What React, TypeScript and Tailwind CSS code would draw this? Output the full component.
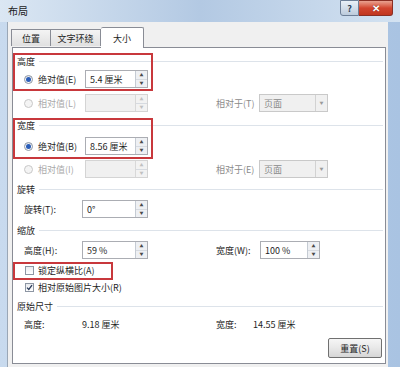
import * as React from 'react';

const font = { fontFamily: '"Microsoft YaHei", "Noto Sans CJK SC", "Noto Sans", sans-serif' };

const Header = ({ text, className = '' }: { text: string; className?: string }) => (
  <div className={`flex items-center h-[16px] ${className}`}>
    <span className="text-[#1e1e1e]">{text}</span>
    <div className="flex-1 h-px bg-[#dde3ea] ml-[4px]" />
  </div>
);

const Radio = ({ checked, disabled }: { checked?: boolean; disabled?: boolean }) => (
  <span
    className={`w-[9px] h-[9px] rounded-full border flex items-center justify-center shrink-0 ${
      disabled ? 'border-[#c8c8c8] bg-[#f4f4f4]' : 'border-[#8d96a3] bg-gradient-to-b from-[#e6e9ee] to-white'
    }`}
  >
    {checked && <span className="w-[5px] h-[5px] rounded-full bg-[#2a5db8]" />}
  </span>
);

const Spinner = ({ disabled }: { disabled?: boolean }) => (
  <div
    className={`w-[12px] h-full flex flex-col border-l ${
      disabled ? 'border-[#d8d8d8] bg-[#f2f2f2]' : 'border-[#c5cbd3] bg-[#eef0f3]'
    }`}
  >
    <div className="flex-1 flex items-center justify-center border-b border-[#d6dae0]">
      <span className={`text-[4px] leading-none ${disabled ? 'text-[#c0c0c0]' : 'text-[#4a4a4a]'}`}>▲</span>
    </div>
    <div className="flex-1 flex items-center justify-center">
      <span className={`text-[4px] leading-none ${disabled ? 'text-[#c0c0c0]' : 'text-[#4a4a4a]'}`}>▼</span>
    </div>
  </div>
);

const SpinInput = ({ value, w, disabled }: { value?: string; w: string; disabled?: boolean }) => (
  <div
    className={`${w} h-[18px] flex border ${
      disabled ? 'border-[#d4d4d4] bg-[#f0f0f0]' : 'border-[#abadb3] bg-white'
    }`}
  >
    <div className="flex-1 flex items-center pl-[4px] text-[#1e1e1e]">{value}</div>
    <Spinner disabled={disabled} />
  </div>
);

const Select = ({ value }: { value: string }) => (
  <div className="w-[69px] h-[18px] flex border border-[#c9c9c9] bg-[#f0f0f0]">
    <div className="flex-1 flex items-center pl-[4px] text-[#8a8a8a]">{value}</div>
    <div className="w-[12px] border-l border-[#d2d2d2] flex items-center justify-center">
      <span className="text-[4px] leading-none text-[#9a9a9a]">▼</span>
    </div>
  </div>
);

const Check = ({ checked }: { checked?: boolean }) => (
  <span className="w-[9px] h-[9px] border border-[#8d96a3] bg-gradient-to-b from-[#e8ebef] to-white flex items-center justify-center shrink-0">
    {checked && (
      <svg width="7" height="7" viewBox="0 0 7 7">
        <path d="M1 3.6 L2.8 5.4 L6 1.2" fill="none" stroke="#2b3c5a" strokeWidth="1.3" />
      </svg>
    )}
  </span>
);

const RadioRow = ({
  label,
  checked,
  disabled,
  value,
  rel,
  className = '',
}: {
  label: string;
  checked?: boolean;
  disabled?: boolean;
  value?: string;
  rel?: string;
  className?: string;
}) => (
  <div className={`flex items-center h-[20px] ${className}`}>
    <div className={`ml-[7px] w-[61px] flex items-center ${disabled ? 'text-[#a9a9a9]' : 'text-[#1e1e1e]'}`}>
      <Radio checked={checked} disabled={disabled} />
      <span className="ml-[5px]">{label}</span>
    </div>
    <SpinInput value={value} w="w-[63px]" disabled={disabled} />
    {rel && (
      <>
        <span className="ml-[68px] w-[43px] text-[#8a8a8a]">{rel}</span>
        <Select value="页面" />
      </>
    )}
  </div>
);

export default function App() {
  return (
    <div
      className="w-[400px] h-[367px] overflow-hidden relative bg-gradient-to-r from-[#c8daee] via-[#b7cde6] to-[#a9c3e2] text-[9px] leading-none"
      style={font}
    >
      {/* title bar */}
      <div className="h-[22px] flex items-start relative bg-gradient-to-r from-[#dbe7f3] via-[#b3c9e3] to-[#d3e2f1]">
        <span className="mt-[6px] ml-[8px] text-[10px] text-[#1a1a1a]">布局</span>
        <div className="ml-auto mr-[7px] flex">
          <div className="w-[19px] h-[16px] border border-[#6d7f97] rounded-bl-[3px] bg-gradient-to-b from-[#e9f0f7] to-[#bccbdc] flex items-center justify-center text-[9px] font-bold text-[#2c3e57]">
            ?
          </div>
          <div className="w-[34px] h-[16px] border border-[#8a2f24] rounded-br-[3px] border-l-0 bg-gradient-to-b from-[#e8a190] via-[#d2452f] to-[#c0361f] flex items-center justify-center">
            <span className="text-white text-[10px] font-bold [text-shadow:0_0_1px_#5a1208]">✕</span>
          </div>
        </div>
      </div>

      {/* body */}
      <div className="ml-[7px] w-[381px] h-[345px] bg-[#f0f0f0] border-l border-[#9aa7b6]">
        {/* tabs */}
        <div className="flex items-end h-[25px] ml-[3px] relative z-10">
          <div className="w-[40px] h-[17px] border border-[#898c95] border-b-0 bg-gradient-to-b from-[#f4f4f4] to-[#e0e0e0] flex items-center justify-center text-[#1e1e1e] mb-[1px]">
            位置
          </div>
          <div className="w-[50px] h-[17px] border border-[#898c95] border-b-0 border-l-0 bg-gradient-to-b from-[#f4f4f4] to-[#e0e0e0] flex items-center justify-center text-[#1e1e1e] mb-[1px]">
            文字环绕
          </div>
          <div className="w-[43px] h-[21px] border border-[#898c95] border-b-0 border-l-0 bg-white flex items-center justify-center text-[#1e1e1e] -mb-[1px] rounded-t-[2px]">
            大小
          </div>
        </div>

        {/* panel */}
        <div className="ml-[4px] w-[374px] h-[317px] border border-[#898c95] bg-white pl-[4px] pr-[2px] pt-[5px] relative">
          <Header text="高度" />
          <RadioRow label="绝对值(E)" checked value="5.4 厘米" />
          <RadioRow label="相对值(L)" disabled rel="相对于(T)" className="mt-[4px]" />

          <Header text="宽度" className="mt-[4px]" />
          <RadioRow label="绝对值(B)" checked value="8.56 厘米" className="mt-[3px]" />
          <RadioRow label="相对值(I)" disabled rel="相对于(E)" className="mt-[3px]" />

          <Header text="旋转" className="mt-[2px]" />
          <div className="flex items-center h-[20px] mt-[2px]">
            <span className="ml-[7px] w-[58px] text-[#1e1e1e]">旋转(T):</span>
            <SpinInput value="0°" w="w-[66px]" />
          </div>

          <Header text="缩放" className="mt-[3px]" />
          <div className="flex items-center h-[20px] mt-[2px]">
            <span className="ml-[7px] w-[58px] text-[#1e1e1e]">高度(H):</span>
            <SpinInput value="59 %" w="w-[66px]" />
            <span className="ml-[68px] w-[44px] text-[#1e1e1e]">宽度(W):</span>
            <SpinInput value="100 %" w="w-[60px]" />
          </div>

          <div className="flex items-center h-[16px] mt-[2px] ml-[8px] text-[#1e1e1e]">
            <Check />
            <span className="ml-[4px]">锁定纵横比(A)</span>
          </div>
          <div className="flex items-center h-[16px] mt-[1px] ml-[8px] text-[#1e1e1e]">
            <Check checked />
            <span className="ml-[4px]">相对原始图片大小(R)</span>
          </div>

          <Header text="原始尺寸" className="mt-[3px]" />
          <div className="flex items-center h-[18px] mt-[1px] text-[#1e1e1e]">
            <span className="ml-[7px] w-[58px]">高度:</span>
            <span className="w-[134px]">9.18 厘米</span>
            <span className="w-[37px]">宽度:</span>
            <span>14.55 厘米</span>
          </div>

          <div className="flex justify-end mt-[5px] pr-[1px]">
            <div className="w-[54px] h-[20px] border border-[#707070] rounded-[2px] bg-gradient-to-b from-[#f6f6f6] via-[#e8e8e8] to-[#d6d6d6] flex items-center justify-center text-[#1e1e1e]">
              重置(S)
            </div>
          </div>

          {/* red highlight boxes */}
          <div className="absolute left-[0px] top-[5px] w-[140px] h-[38px] border-2 border-[#c8383c] pointer-events-none" />
          <div className="absolute left-[0px] top-[70px] w-[140px] h-[41px] border-2 border-[#c8383c] pointer-events-none" />
          <div className="absolute left-[0px] top-[214px] w-[100px] h-[18px] border-2 border-[#c8383c] pointer-events-none" />
        </div>
      </div>
    </div>
  );
}
